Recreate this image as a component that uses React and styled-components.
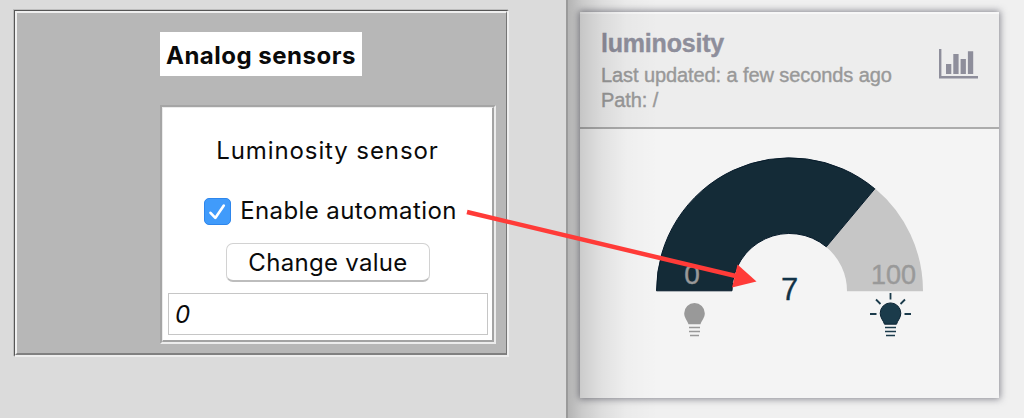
import React from "react";
import styled, { createGlobalStyle } from "styled-components";

const GlobalStyle = createGlobalStyle`
  * { box-sizing: border-box; }
  body { margin: 0; background: #dbdbdb; }
`;

const Page = styled.main`
  position: relative;
  display: flex;
  width: 1024px;
  height: 418px;
  overflow: hidden;
  background: #dbdbdb;
`;

const ControlPane = styled.section`
  flex: 0 0 566px;
  padding: 10px 0 0 14px;
  font-family: Inter, "Liberation Sans", sans-serif;
  font-size: 24px;
  color: #0a0a0a;
`;

const OuterFrame = styled.div`
  width: 495px;
  height: 347px;
  border: solid;
  border-width: 1px 2px 2px 1px;
  border-color: #565656 #eeeeee #eeeeee #565656;
  box-shadow: -1px -1px 0 #bdbdbd;
`;

const FrameBody = styled.div`
  height: 100%;
  padding: 20px 11px 0 144px;
  border: solid;
  border-width: 2px 1px 2px 2px;
  border-color: #efefef #757575 #808080 #efefef;
  background: #b7b7b7;
`;

const Heading = styled.h1`
  width: 202px;
  height: 44px;
  margin: -1px 0 29px -1px;
  padding-left: 6px;
  background: #fff;
  font-size: 24px;
  font-weight: 650;
  line-height: 48px;
  letter-spacing: 0.5px;
  white-space: nowrap;
`;

const SensorFrame = styled.div`
  width: 336px;
  height: 239px;
  margin-left: -1px;
  border: solid;
  border-width: 2px;
  border-color: #a5a5a5 #ececec #ececec #a5a5a5;
`;

const SensorBody = styled.div`
  display: flex;
  flex-direction: column;
  align-items: center;
  height: 100%;
  padding: 26px 4px 0 5px;
  border: solid;
  border-width: 1px 2px 2px 1px;
  border-color: #ebebeb #a3a3a3 #a3a3a3 #ebebeb;
  background: #fff;
`;

const SensorName = styled.div`
  height: 34px;
  margin-left: -1px;
  line-height: 34px;
  letter-spacing: 0.9px;
  white-space: nowrap;
`;

const CheckRow = styled.label`
  display: flex;
  align-items: center;
  gap: 9px;
  height: 36px;
  margin-top: 25px;
  margin-left: 5px;
  letter-spacing: 0.4px;
  line-height: 36px;
  white-space: nowrap;
`;

const CheckBox = styled.span`
  display: flex;
  width: 27px;
  height: 27px;
  border: 1px solid #2e86ec;
  border-radius: 5px;
  background: #409bfb;
`;

const ValueButton = styled.button`
  flex: none;
  width: 204px;
  height: 39px;
  margin-top: 14px;
  padding: 0;
  border: 1px solid #d2d2d2;
  border-bottom: 2px solid #bdbdbd;
  border-radius: 7px;
  background: #fff;
  color: inherit;
  font: inherit;
  line-height: 37px;
  letter-spacing: 0.3px;
`;

const ValueField = styled.div`
  align-self: stretch;
  height: 42px;
  margin-top: 11px;
  padding-left: 6px;
  border: 1px solid #c6c6c6;
  font-style: italic;
  line-height: 41px;
`;

const DashboardPane = styled.section`
  position: relative;
  flex: 1;
  padding: 12px 0 0 12px;
  border-left: 2px solid #9a9a9a;
  background: #f0f0f0;
  font-family: "Liberation Sans", Arial, sans-serif;

  &::after {
    content: "";
    position: absolute;
    inset: 0 auto 0 0;
    width: 90px;
    background: linear-gradient(to right, rgba(0,0,0,.25), rgba(0,0,0,.155) 14px, rgba(0,0,0,.08) 34px, rgba(0,0,0,.025) 58px, rgba(0,0,0,0));
  }
`;

const Card = styled.article`
  width: 419px;
  height: 386px;
  background: #f4f4f4;
  box-shadow: 0 0 7px 1px rgba(60, 60, 75, 0.6);
`;

const CardHeader = styled.header`
  display: flex;
  justify-content: space-between;
  height: 117px;
  padding: 14px 21px 0;
  border-top: 2px solid #f7f7f7;
  border-bottom: 2px solid #acacac;
  background: #ededed;
`;

const CardTitle = styled.h2`
  height: 35px;
  margin: 0;
  color: #8e8e9b;
  font-size: 25px;
  line-height: 30px;
  letter-spacing: -0.2px;
  -webkit-text-stroke: 0.4px #8e8e9b;
`;

const Detail = styled.div`
  height: 25px;
  color: #999;
  font-size: 20px;
  line-height: 25px;
  letter-spacing: -0.09px;
  white-space: nowrap;
  -webkit-text-stroke: 0.4px #999;
`;

const ChartIcon = styled.svg`
  flex: none;
  margin-top: 21px;
`;

const Gauge = styled.svg`
  display: block;
  font-family: "Liberation Sans", Arial, sans-serif;
`;

const Arrow = styled.svg`
  position: absolute;
  inset: 0;
  z-index: 1;
  pointer-events: none;
`;

function Bulb({ x, color, lit }) {
  return (
    <g transform={`translate(${x} 173)`} fill={color} stroke={color}>
      <path
        stroke={lit ? "#0b2434" : "none"}
        strokeWidth="1"
        d="M-6 10.2C-7 6.5-10.3 4-10.3-.8A10.3 10.3 0 0 1 10.3-.8C10.3 4 7 6.5 6 10.2Z"
      />
      <path fill="none" strokeWidth="1.6" d="M-5.5 13.5H5.5M-5.5 17.5H5.5M-4.5 21.5H4.5" />
      {lit && (
        <path
          fill="none"
          strokeWidth="1.8"
          d="M0-21V-14.5M-14.5-14.5L-10-10M14.5-14.5L10-10M-20.5 0H-14M14 0H20.5"
        />
      )}
    </g>
  );
}

export default function App() {
  return (
    <Page>
      <GlobalStyle />
      <ControlPane>
        <OuterFrame>
          <FrameBody>
            <Heading>Analog sensors</Heading>
            <SensorFrame>
              <SensorBody>
                <SensorName>Luminosity sensor</SensorName>
                <CheckRow>
                  <CheckBox role="checkbox" aria-checked="true">
                    <svg width="25" height="25" viewBox="0 0 25 25" fill="none">
                      <path d="M5.5 13.8L10.3 18.9L18.8 6.5" stroke="#fff" strokeWidth="2.6" strokeLinecap="round" strokeLinejoin="round" />
                    </svg>
                  </CheckBox>
                  Enable automation
                </CheckRow>
                <ValueButton>Change value</ValueButton>
                <ValueField>0</ValueField>
              </SensorBody>
            </SensorFrame>
          </FrameBody>
        </OuterFrame>
      </ControlPane>
      <DashboardPane>
        <Card>
          <CardHeader>
            <div>
              <CardTitle>luminosity</CardTitle>
              <Detail>Last updated: a few seconds ago</Detail>
              <Detail>Path: /</Detail>
            </div>
            <ChartIcon width="39" height="30" viewBox="0 0 39 30" fill="#8e8e9b">
              <path d="M0 0H2.4V27H39V29.5H0ZM7 15H12.3V25H7ZM14.3 5H19.6V25H14.3ZM21.6 10H26.9V25H21.6ZM28.9 2.3H34.2V25H28.9Z" />
            </ChartIcon>
          </CardHeader>
          <Gauge width="419" height="269" viewBox="0 0 419 269">
            <path fill="#c6c6c6" d="M295.1 59.5A133.5 133.5 0 0 1 343 162.3H267A57.5 57.5 0 0 0 246.3 118Z" />
            <path fill="#142b37" stroke="#061a2a" strokeWidth="1" d="M76.5 161.8A133 133 0 0 1 294.8 59.8L246.3 117.8A57.5 57.5 0 0 0 152 161.8Z" />
            <text x="112" y="154.5" textAnchor="middle" fontSize="28" fill="#999" stroke="#999" strokeWidth=".4">0</text>
            <text x="313.5" y="154.5" textAnchor="middle" fontSize="27" fill="#999" stroke="#999" strokeWidth=".4">100</text>
            <text x="209.5" y="171" textAnchor="middle" fontSize="31" fill="#123347" stroke="#123347" strokeWidth=".3">7</text>
            <g transform="translate(0 12)">
              <Bulb x={114.5} color="#999" />
              <Bulb x={310.5} color="#1b3b4b" lit />
            </g>
          </Gauge>
        </Card>
      </DashboardPane>
      <Arrow width="1024" height="418" viewBox="0 0 1024 418">
        <path d="M467 212L740 277" stroke="#ff3b38" strokeWidth="4.5" />
        <path d="M737.5 264.5L756.5 281.5L732 287.5Z" fill="#ff3b38" />
      </Arrow>
    </Page>
  );
}
